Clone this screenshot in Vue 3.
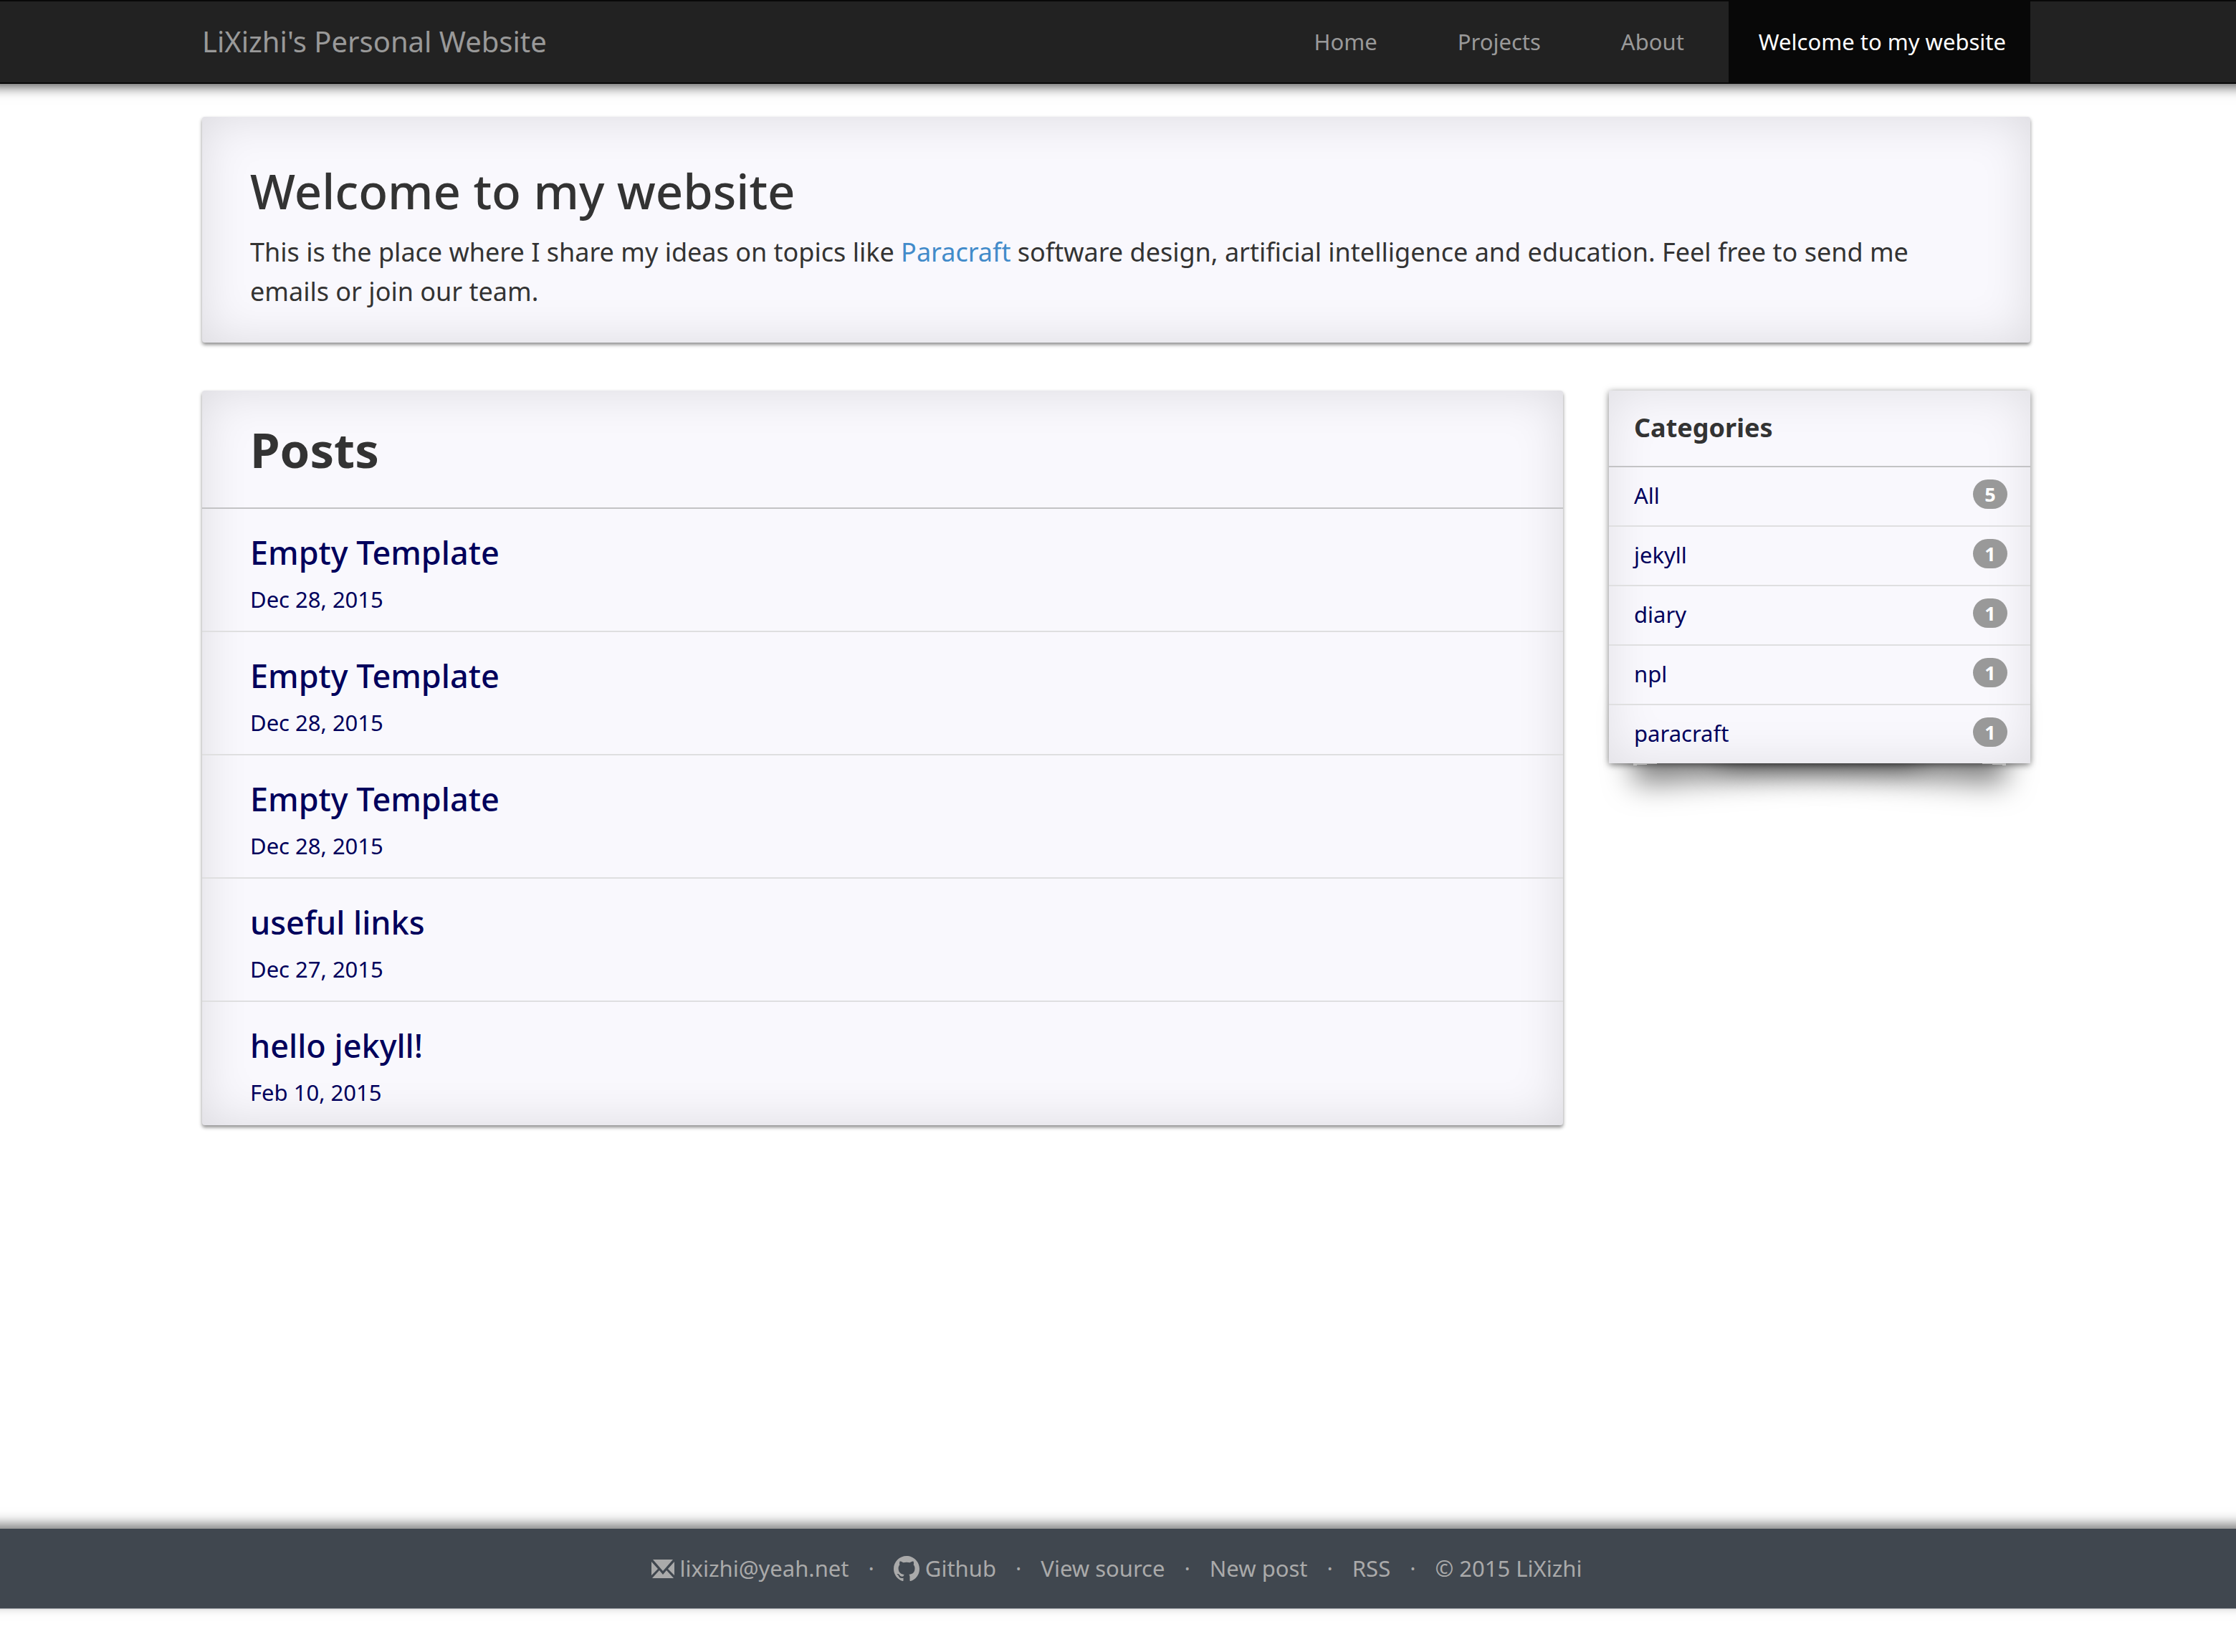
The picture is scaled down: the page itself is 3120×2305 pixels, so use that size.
<script setup>
const nav = ['Home', 'Projects', 'About']
const posts = [
  { title: 'Empty Template', date: 'Dec 28, 2015' },
  { title: 'Empty Template', date: 'Dec 28, 2015' },
  { title: 'Empty Template', date: 'Dec 28, 2015' },
  { title: 'useful links', date: 'Dec 27, 2015' },
  { title: 'hello jekyll!', date: 'Feb 10, 2015' },
]
const categories = [
  { name: 'All', count: 5 },
  { name: 'jekyll', count: 1 },
  { name: 'diary', count: 1 },
  { name: 'npl', count: 1 },
  { name: 'paracraft', count: 1 },
]
</script>

<template>
  <div class="page">
    <header class="navbar">
      <a class="brand" href="#">LiXizhi's Personal Website</a>
      <nav class="menu">
        <a v-for="item in nav" :key="item" href="#">{{ item }}</a>
        <a class="active" href="#">Welcome to my website</a>
      </nav>
    </header>

    <main class="content">
      <section class="panel intro">
        <h1>Welcome to my website</h1>
        <p>
          This is the place where I share my ideas on topics like
          <a href="#">Paracraft</a> software design, artificial intelligence and
          education. Feel free to send me emails or join our team.
        </p>
      </section>

      <div class="columns">
        <section class="panel posts">
          <h2>Posts</h2>
          <ul>
            <li v-for="(post, i) in posts" :key="i">
              <a href="#">
                <h3>{{ post.title }}</h3>
                <time>{{ post.date }}</time>
              </a>
            </li>
          </ul>
        </section>

        <aside class="lifted">
          <div class="panel categories">
            <h2>Categories</h2>
            <ul>
              <li v-for="cat in categories" :key="cat.name">
                <a href="#">
                  <span>{{ cat.name }}</span>
                  <span class="badge">{{ cat.count }}</span>
                </a>
              </li>
            </ul>
          </div>
        </aside>
      </div>
    </main>

    <footer class="footer">
      <a href="#">
        <svg class="mail" viewBox="0 0 32 26" aria-hidden="true">
          <path d="M2 0H30L16 16ZM0 3L9 13L0 22ZM32 3L23 13L32 22ZM1 26L11 15L16 21L21 15L31 26Z" />
        </svg>
        lixizhi@yeah.net
      </a>
      <span class="dot">·</span>
      <a href="#">
        <svg class="github" viewBox="0 0 16 16" aria-hidden="true">
          <path d="M8 0C3.58 0 0 3.58 0 8c0 3.54 2.29 6.53 5.47 7.59.4.07.55-.17.55-.38 0-.19-.01-.82-.01-1.49-2.01.37-2.53-.49-2.69-.94-.09-.23-.48-.94-.82-1.13-.28-.15-.68-.52-.01-.53.63-.01 1.08.58 1.23.82.72 1.21 1.87.87 2.33.66.07-.52.28-.87.51-1.07-1.78-.2-3.64-.89-3.64-3.95 0-.87.31-1.59.82-2.15-.08-.2-.36-1.02.08-2.12 0 0 .67-.21 2.2.82.64-.18 1.32-.27 2-.27s1.36.09 2 .27c1.53-1.04 2.2-.82 2.2-.82.44 1.1.16 1.92.08 2.12.51.56.82 1.27.82 2.15 0 3.07-1.87 3.75-3.65 3.95.29.25.54.73.54 1.48 0 1.07-.01 1.93-.01 2.2 0 .21.15.46.55.38A8.01 8.01 0 0 0 16 8c0-4.42-3.58-8-8-8z" />
        </svg>
        Github
      </a>
      <span class="dot">·</span>
      <a href="#">View source</a>
      <span class="dot">·</span>
      <a href="#">New post</a>
      <span class="dot">·</span>
      <a href="#">RSS</a>
      <span class="dot">·</span>
      <span>© 2015 LiXizhi</span>
    </footer>
  </div>
</template>

<style>
body {
  margin: 0;
  background: #fff;
}
</style>

<style scoped>
.page {
  box-sizing: border-box;
  display: flex;
  flex-direction: column;
  min-height: 100vh;
  padding-bottom: 60px;
  overflow-x: clip;
  font-family: "Noto Sans", "Open Sans", sans-serif;
  font-size: 31px;
  line-height: 44px;
  color: #333;
}
a {
  text-decoration: none;
}
h1, h2, h3, p, ul {
  margin: 0;
  padding: 0;
}
ul {
  list-style: none;
}

/* The bars overhang the window so their shadows stay even to the edges. */
.navbar,
.footer {
  margin: 0 -20px;
}
.navbar {
  display: flex;
  justify-content: space-between;
  padding: 0 307px 0 302px;
  background: #222;
  border-top: 2px solid #080808;
  border-bottom: 2px solid #080808;
  box-shadow: 0 2px 18px rgba(0, 0, 0, 0.8);
}
.brand {
  font-size: 40px;
  line-height: 112px;
  color: #999;
}
.menu {
  display: flex;
  gap: 20px;
}
.menu a {
  padding: 0 42px 0 50px;
  line-height: 113px;
  color: #999;
}
.menu .active {
  padding: 0 34px 0 42px;
  background: #080808;
  color: #fff;
}

.content {
  flex: 1;
  padding: 46px 287px 64px 282px;
}
.panel {
  background: #f9f8fd;
  border-radius: 4px;
  box-shadow: 0 3px 5px rgba(0, 0, 0, 0.45), inset 0 0 67px rgba(0, 0, 0, 0.12);
}
.intro {
  padding: 53px 67px 44px;
}
.intro h1 {
  font-size: 67px;
  font-weight: 500;
  line-height: 100px;
}
.intro p {
  padding-top: 8px;
  font-size: 36px;
  line-height: 55px;
}
.intro p a {
  color: #428bca;
}

.columns {
  display: flex;
  align-items: flex-start;
  gap: 64px;
  margin-top: 67px;
}
.posts {
  flex: 1;
  padding-bottom: 2px;
}
.posts h2 {
  padding: 32px 67px 31px;
  border-bottom: 2px solid #c3c3c5;
  font-size: 67px;
  line-height: 100px;
}
.posts li a {
  display: block;
  padding: 32px 67px 22px;
  color: #00005c;
}
li + li {
  border-top: 2px solid #dfdfe0;
}
.posts h3 {
  padding-bottom: 14px;
  font-size: 45px;
  font-weight: 500;
  line-height: 58px;
}
.posts time {
  display: block;
}

.lifted {
  position: relative;
  z-index: 0;
  width: 588px;
}
.lifted::before,
.lifted::after {
  content: "";
  position: absolute;
  z-index: -1;
  bottom: 11px;
  width: 68%;
  height: 20%;
  box-shadow: 0 26px 40px rgba(0, 0, 0, 0.5);
}
.lifted::before {
  left: 30px;
  transform: rotate(-4deg);
}
.lifted::after {
  right: 30px;
  transform: rotate(4deg);
}
.categories {
  border-radius: 0;
  box-shadow: 0 2px 9px rgba(0, 0, 0, 0.5), inset 0 0 67px rgba(0, 0, 0, 0.1);
}
.categories h2 {
  padding: 27px 35px 28px;
  border-bottom: 2px solid #c3c3c5;
  font-size: 36px;
  line-height: 50px;
}
.categories li a {
  display: flex;
  justify-content: space-between;
  align-items: flex-start;
  padding: 0 32px 2px 35px;
  line-height: 79px;
  color: #00005c;
}
.badge {
  min-width: 48px;
  margin-top: 17px;
  border-radius: 21px;
  background: #999;
  color: #fff;
  font-size: 27px;
  font-weight: 700;
  line-height: 41px;
  text-align: center;
}

.footer {
  display: flex;
  justify-content: center;
  align-items: center;
  gap: 27px;
  padding-right: 4px;
  background: #40474f;
  border-bottom: 1px solid #a5a8ac;
  box-shadow: 0 -7px 16px rgba(0, 0, 0, 0.5);
  line-height: 111px;
  color: #aaa;
}
.footer a {
  display: flex;
  align-items: center;
  gap: 8px;
  color: #aaa;
}
.footer svg {
  fill: #aaa;
}
.mail {
  width: 32px;
  height: 26px;
}
.github {
  width: 36px;
  height: 36px;
}
</style>
